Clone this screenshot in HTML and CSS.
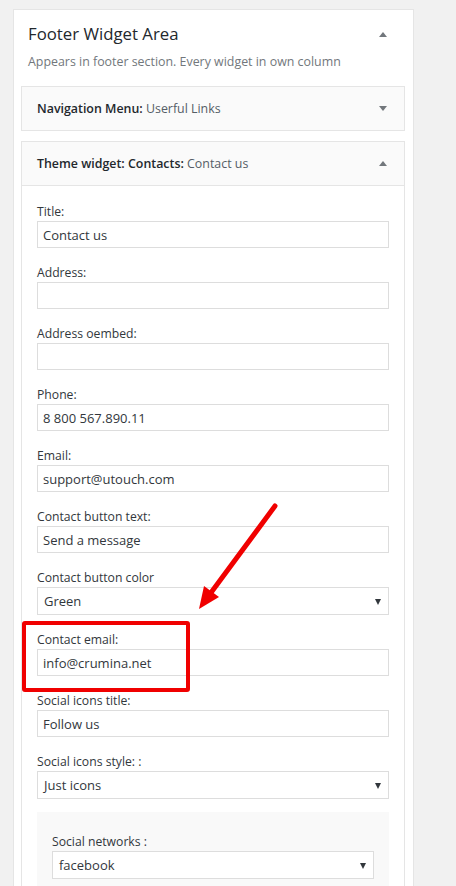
FILE: index.html
```html
<!DOCTYPE html>
<html lang="en">
<head>
<meta charset="utf-8">
<title>Footer Widget Area</title>
<link rel="stylesheet" href="styles.css">
</head>
<body>
<div class="panel">
  <div class="panel-head">
    <h2 class="panel-title">Footer Widget Area</h2>
    <svg class="caret caret-up" width="8" height="5" viewBox="0 0 8 5"><polygon points="4,0 8,5 0,5"/></svg>
  </div>
  <p class="panel-desc">Appears in footer section. Every widget in own column</p>

  <div class="widget">
    <div class="widget-top">
      <span class="widget-name"><b>Navigation Menu:</b> <span class="in-title">Userful Links</span></span>
      <svg class="caret" width="8" height="5" viewBox="0 0 8 5"><polygon points="0,0 8,0 4,5"/></svg>
    </div>
  </div>

  <div class="widget widget-open">
    <div class="widget-top">
      <span class="widget-name"><b>Theme widget: Contacts:</b> <span class="in-title">Contact us</span></span>
      <svg class="caret" width="8" height="5" viewBox="0 0 8 5"><polygon points="4,0 8,5 0,5"/></svg>
    </div>
    <div class="widget-inside">
      <div class="field"><label>Title:</label><input class="text" type="text" value="Contact us"></div>
      <div class="field"><label>Address:</label><input class="text" type="text" value=""></div>
      <div class="field"><label>Address oembed:</label><input class="text" type="text" value=""></div>
      <div class="field"><label>Phone:</label><input class="text" type="text" value="8 800 567.890.11"></div>
      <div class="field"><label>Email:</label><input class="text" type="text" value="support@utouch.com"></div>
      <div class="field"><label>Contact button text:</label><input class="text" type="text" value="Send a message"></div>
      <div class="field"><label>Contact button color</label><div class="select"><span>Green</span></div></div>
      <div class="field"><label>Contact email:</label><input class="text" type="text" value="info@crumina.net"></div>
      <div class="field"><label>Social icons title:</label><input class="text" type="text" value="Follow us"></div>
      <div class="field field-last"><label>Social icons style: :</label><div class="select"><span>Just icons</span></div></div>
      <div class="group">
        <div class="field"><label>Social networks :</label><div class="select"><span>facebook</span></div></div>
      </div>
    </div>
  </div>
</div>

<div class="highlight"></div>
<svg class="arrow" width="456" height="886" viewBox="0 0 456 886">
  <line x1="275" y1="506" x2="210" y2="594" stroke="#f00000" stroke-width="5" stroke-linecap="round"/>
  <polygon points="199,609 204,586 219,597" fill="#f00000"/>
</svg>
</body>
</html>
```

FILE: styles.css
```css
html, body {
  margin: 0;
  padding: 0;
}
body {
  background: #f1f1f1;
  font-family: "Open Sans", "Noto Sans", sans-serif;
  color: #23282d;
  height: 886px;
  overflow: hidden;
  position: relative;
}
.panel {
  margin: 9px 0 0 13px;
  background: #fff;
  border: 1px solid #e5e5e5;
  border-bottom: none;
  padding: 0 8px 0 7px;
  box-sizing: border-box;
  width: 401px;
  min-height: 900px;
}
.panel-head {
  display: flex;
  align-items: center;
  justify-content: space-between;
  padding: 12px 18px 0 7px;
  height: 24px;
}
.panel-title {
  margin: 0;
  font-size: 16.8px;
  font-weight: 400;
  line-height: 24px;
  color: #23282d;
}
.caret {
  fill: #72777c;
  display: block;
}
.panel-desc {
  margin: 7px 0 0 7px;
  font-size: 12.4px;
  line-height: 18px;
  color: #72777c;
}
.widget {
  margin-top: 15px;
  border: 1px solid #e5e5e5;
  background: #fff;
}
.widget + .widget {
  margin-top: 10px;
}
.widget-open {
  border-bottom: none;
}
.widget-top {
  height: 43px;
  background: #fafafa;
  display: flex;
  align-items: center;
  justify-content: space-between;
  padding: 0 17px 0 15px;
}
.widget-open .widget-top {
  border-bottom: 1px solid #e5e5e5;
}
.widget-name {
  font-size: 12.4px;
  color: #23282d;
}
.widget-name b {
  font-weight: 600;
}
.in-title {
  color: #555d66;
}
.widget-inside {
  padding: 17px 15px 40px;
}
.field {
  margin-bottom: 16px;
}
.field-last {
  margin-bottom: 13px;
}
.field label {
  display: block;
  font-size: 12.2px;
  line-height: 18px;
  color: #32373c;
}
.text {
  display: block;
  width: 100%;
  box-sizing: border-box;
  height: 27px;
  margin: 0;
  border: 1px solid #ddd;
  padding: 0 5px;
  font-family: inherit;
  font-size: 13px;
  color: #32373c;
  background: #fff;
  outline: none;
}
.select {
  position: relative;
  height: 28px;
  box-sizing: border-box;
  border: 1px solid #ddd;
  background: #fff;
  display: flex;
  align-items: center;
  padding: 0 6px;
  font-size: 13px;
  color: #32373c;
}
.select::after {
  content: "";
  position: absolute;
  right: 7px;
  top: 11px;
  border-left: 3.5px solid transparent;
  border-right: 3.5px solid transparent;
  border-top: 6px solid #32373c;
}
.group {
  background: #f9f9f9;
  padding: 21px 15px 20px;
}
.group .field {
  margin-bottom: 0;
}
.highlight {
  position: absolute;
  left: 22px;
  top: 621px;
  width: 160px;
  height: 63px;
  border: 4px solid #f00000;
  border-radius: 3px;
}
.arrow {
  position: absolute;
  left: 0;
  top: 0;
  pointer-events: none;
}
```
